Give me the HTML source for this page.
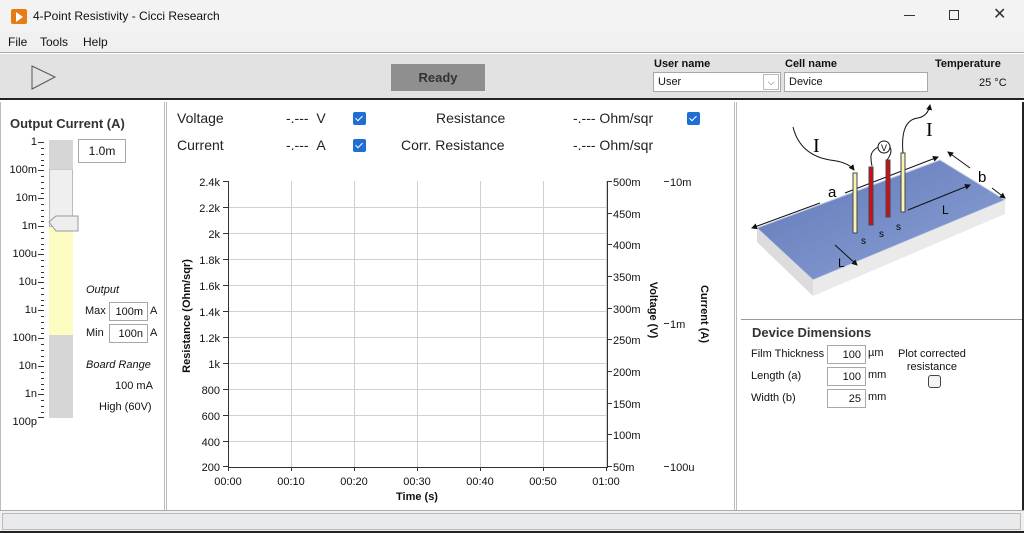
<!DOCTYPE html>
<html><head><meta charset="utf-8"><style>
*{margin:0;padding:0;box-sizing:border-box}
body{width:1024px;height:533px;overflow:hidden;background:#fff;font-family:"Liberation Sans",sans-serif;color:#111;position:relative}
.a{position:absolute;white-space:nowrap}
.box{position:absolute;border:1px solid #a8a8a8;background:#fff;font-size:11px;padding:0 4px;line-height:18px}
.cb{position:absolute;width:13px;height:13px;background:#1e6fd1;border-radius:2px}
.cb:after{content:"";position:absolute;left:4px;top:2px;width:3px;height:6px;border:solid #fff;border-width:0 1.3px 1.3px 0;transform:rotate(45deg)}
.s11{font-size:11px}
.b{font-weight:bold}
</style></head><body>
<div class="a" style="left:0;top:0;width:1024px;height:32px;background:#f3f3f3"></div>
<div class="a" style="left:11px;top:9px;width:16px;height:15px;background:#e87a17;border-radius:2px"></div>
<div class="a" style="left:16px;top:12px;width:0;height:0;border-left:7px solid #fff;border-top:5px solid transparent;border-bottom:5px solid transparent"></div>
<div class="a" style="left:33px;top:9px;font-size:12px">4-Point Resistivity - Cicci Research</div>
<div class="a" style="left:904px;top:15px;width:11px;height:1px;background:#333"></div>
<div class="a" style="left:949px;top:10px;width:10px;height:10px;border:1px solid #333"></div>
<div class="a" style="left:993px;top:4px;font-size:16px;color:#333">✕</div>
<div class="a" style="left:0;top:32px;width:1024px;height:21px;background:#f0f0f0;border-bottom:1px solid #aaa"></div>
<div class="a" style="left:8px;top:35px;font-size:12px">File</div>
<div class="a" style="left:40px;top:35px;font-size:12px">Tools</div>
<div class="a" style="left:83px;top:35px;font-size:12px">Help</div>
<div class="a" style="left:0;top:54px;width:1024px;height:46px;background:#e2e2e2;border-bottom:2px solid #222"></div>
<svg class="a" style="left:30px;top:64px" width="28" height="28"><path d="M2 2 L25 13 L2 25 Z" fill="none" stroke="#555" stroke-width="1"/></svg>
<div class="a" style="left:391px;top:64px;width:94px;height:27px;background:#8f8f8f;font-size:13px;font-weight:bold;color:#333;text-align:center;line-height:27px">Ready</div>
<div class="a s11 b" style="left:654px;top:58px">User name</div>
<div class="box" style="left:653px;top:72px;width:128px;height:20px">User</div>
<div class="a" style="left:763px;top:74px;width:16px;height:16px;border:1px solid #bbb;background:#fff;font-size:9px;text-align:center;line-height:14px;color:#555">⌵</div>
<div class="a s11 b" style="left:785px;top:58px">Cell name</div>
<div class="box" style="left:784px;top:72px;width:144px;height:20px">Device</div>
<div class="a s11 b" style="left:935px;top:58px">Temperature</div>
<div class="a s11" style="left:979px;top:77px">25 °C</div>
<div class="a" style="left:164px;top:102px;width:3px;height:408px;border-left:1px solid #bbb;border-right:1px solid #bbb"></div>
<div class="a" style="left:734px;top:102px;width:3px;height:408px;border-left:1px solid #bbb;border-right:1px solid #bbb"></div>
<div class="a" style="left:0;top:102px;width:1px;height:408px;background:#bbb"></div>
<div class="a" style="left:1022px;top:102px;width:2px;height:431px;background:#222"></div>
<div class="a" style="left:0;top:510px;width:1024px;height:23px;background:#f0f0f0;border-top:1px solid #aaa"></div>
<div class="a" style="left:2px;top:513px;width:1019px;height:17px;background:#e8eaec;border:1px solid #bbb"></div>
<div class="a" style="left:0;top:531px;width:1024px;height:2px;background:#222"></div>
<div class="a b" style="left:10px;top:116px;font-size:13px;color:#333">Output Current (A)</div>
<div class="a" style="left:49px;top:140px;width:24px;height:278px;background:#d6d6d6"></div>
<div class="a" style="left:49px;top:169px;width:24px;height:58px;background:#efefef;border:1px solid #bbb;border-top-color:#ccc"></div>
<div class="a" style="left:49px;top:227px;width:24px;height:108px;background:#fdfdc3"></div>
<svg class="a" style="left:48px;top:214px" width="32" height="20"><path d="M1 8 L8 2 L30 2 L30 17 L8 17 Z" fill="#eee" stroke="#999"/></svg>
<div class="box" style="left:78px;top:139px;width:48px;height:24px;font-size:12px;text-align:center;line-height:22px">1.0m</div>
<div class="a s11" style="left:0;top:135px;width:37px;text-align:right;line-height:14px">1<br><br>100m<br><br>10m<br><br>1m<br><br>100u<br><br>10u<br><br>1u<br><br>100n<br><br>10n<br><br>1n<br><br>100p</div>
<svg class="a" style="left:38px;top:140px" width="8" height="280">
<g stroke="#333" stroke-width="1">
<path d="M0 2.5h6M0 30.5h6M0 58.5h6M0 86.5h6M0 114.5h6M0 142.5h6M0 170.5h6M0 198.5h6M0 226.5h6M0 254.5h6M0 277.5h6"/>
<path d="M3 8.5h3M3 14.5h3M3 20.5h3M3 25.5h3M3 36.5h3M3 42.5h3M3 48.5h3M3 53.5h3M3 64.5h3M3 70.5h3M3 76.5h3M3 81.5h3M3 92.5h3M3 98.5h3M3 104.5h3M3 109.5h3M3 120.5h3M3 126.5h3M3 132.5h3M3 137.5h3M3 148.5h3M3 154.5h3M3 160.5h3M3 165.5h3M3 176.5h3M3 182.5h3M3 188.5h3M3 193.5h3M3 204.5h3M3 210.5h3M3 216.5h3M3 221.5h3M3 232.5h3M3 238.5h3M3 244.5h3M3 249.5h3M3 260.5h3M3 266.5h3M3 272.5h3"/></g></svg>
<div class="a s11" style="left:86px;top:284px;font-style:italic">Output</div>
<div class="a s11" style="left:85px;top:305px">Max</div>
<div class="box" style="left:109px;top:302px;width:39px;height:19px;text-align:right">100m</div>
<div class="a s11" style="left:150px;top:305px">A</div>
<div class="a s11" style="left:86px;top:327px">Min</div>
<div class="box" style="left:109px;top:324px;width:39px;height:19px;text-align:right">100n</div>
<div class="a s11" style="left:150px;top:327px">A</div>
<div class="a s11" style="left:86px;top:359px;font-style:italic">Board Range</div>
<div class="a s11" style="left:115px;top:380px">100 mA</div>
<div class="a s11" style="left:99px;top:401px">High (60V)</div>
<div class="a" style="left:177px;top:110px;font-size:14px;color:#222">Voltage</div>
<div class="a" style="left:286px;top:110px;font-size:14px;color:#222">-.--- &nbsp;V</div>
<div class="cb" style="left:353px;top:112px"></div>
<div class="a" style="left:436px;top:110px;font-size:14px;color:#222">Resistance</div>
<div class="a" style="left:573px;top:110px;font-size:14px;color:#222">-.--- Ohm/sqr</div>
<div class="cb" style="left:687px;top:112px"></div>
<div class="a" style="left:177px;top:137px;font-size:14px;color:#222">Current</div>
<div class="a" style="left:286px;top:137px;font-size:14px;color:#222">-.--- &nbsp;A</div>
<div class="cb" style="left:353px;top:139px"></div>
<div class="a" style="left:401px;top:137px;font-size:14px;color:#222">Corr. Resistance</div>
<div class="a" style="left:573px;top:137px;font-size:14px;color:#222">-.--- Ohm/sqr</div>
<svg class="a" style="left:170px;top:170px" width="560" height="340" font-family="Liberation Sans" font-size="11">
<g stroke="#d0d0d0" stroke-width="1">
<path d="M121.5 11v286M184.5 11v286M247.5 11v286M310.5 11v286M373.5 11v286M436.5 11v286"/>
<path d="M58 37.5h379M58 63.5h379M58 89.5h379M58 115.5h379M58 141.5h379M58 167.5h379M58 193.5h379M58 219.5h379M58 245.5h379M58 271.5h379"/>
</g>
<path d="M58.5 11v286.5H437.5V11" fill="none" stroke="#333"/>
<g stroke="#333">
<path d="M53 11.5h5M53 37.5h5M53 63.5h5M53 89.5h5M53 115.5h5M53 141.5h5M53 167.5h5M53 193.5h5M53 219.5h5M53 245.5h5M53 271.5h5M53 296.5h5"/>
<path d="M437 11.5h5M437 43.5h5M437 74.5h5M437 106.5h5M437 138.5h5M437 169.5h5M437 201.5h5M437 233.5h5M437 264.5h5M437 296.5h5"/>
<path d="M494 11.5h5M494 153.5h5M494 296.5h5"/>
<path d="M58.5 297v4M121.5 297v4M184.5 297v4M247.5 297v4M310.5 297v4M373.5 297v4M436.5 297v4"/>
</g>
<g text-anchor="end" fill="#111">
<text x="50" y="16">2.4k</text><text x="50" y="42">2.2k</text><text x="50" y="68">2k</text><text x="50" y="94">1.8k</text><text x="50" y="120">1.6k</text><text x="50" y="146">1.4k</text><text x="50" y="172">1.2k</text><text x="50" y="198">1k</text><text x="50" y="224">800</text><text x="50" y="250">600</text><text x="50" y="276">400</text><text x="50" y="301">200</text>
</g>
<g fill="#111">
<text x="443" y="16">500m</text><text x="443" y="48">450m</text><text x="443" y="79">400m</text><text x="443" y="111">350m</text><text x="443" y="143">300m</text><text x="443" y="174">250m</text><text x="443" y="206">200m</text><text x="443" y="238">150m</text><text x="443" y="269">100m</text><text x="443" y="301">50m</text>
<text x="500" y="16">10m</text><text x="500" y="158">1m</text><text x="500" y="301">100u</text>
</g>
<g text-anchor="middle" fill="#111">
<text x="58" y="315">00:00</text><text x="121" y="315">00:10</text><text x="184" y="315">00:20</text><text x="247" y="315">00:30</text><text x="310" y="315">00:40</text><text x="373" y="315">00:50</text><text x="436" y="315">01:00</text>
<text x="247" y="330" font-weight="bold">Time (s)</text>
<text transform="translate(20,146) rotate(-90)" font-weight="bold">Resistance (Ohm/sqr)</text>
<text transform="translate(480,140) rotate(90)" font-weight="bold">Voltage (V)</text>
<text transform="translate(531,144) rotate(90)" font-weight="bold">Current (A)</text>
</g>
</svg>
<svg class="a" style="left:740px;top:100px" width="280" height="215" font-family="Liberation Serif">
<defs><linearGradient id="g" x1="0" y1="0" x2="1" y2="1"><stop offset="0" stop-color="#5f78b8"/><stop offset="1" stop-color="#8ea2d6"/></linearGradient>
<marker id="m" markerWidth="6" markerHeight="6" refX="5" refY="3" orient="auto"><path d="M0 0L6 3L0 6Z" fill="#111"/></marker></defs>
<path d="M17 128 L200 60 L265 100 L73 180 Z" fill="url(#g)" stroke="#c4cce4"/>
<path d="M17 128 L73 180 L73 196 L17 142 Z" fill="#dcdcdc"/>
<path d="M73 180 L265 100 L265 114 L73 196 Z" fill="#eaeaea"/>
<g stroke="#111" stroke-width="1" fill="none">
<path d="M80 103 L12 128" marker-end="url(#m)"/>
<path d="M105 93 L198 57" marker-end="url(#m)"/>
<path d="M230 68 L208 52" marker-end="url(#m)"/>
<path d="M252 88 L265 98" marker-end="url(#m)"/>
<path d="M168 110 L230 85" marker-end="url(#m)"/>
<path d="M95 145 L117 165" marker-end="url(#m)"/>
<path d="M53 27 Q60 55 90 60 Q108 62 114 70" marker-end="url(#m)"/>
<path d="M163 53 Q160 20 178 18 Q188 16 190 5" marker-end="url(#m)"/>
<circle cx="144" cy="47" r="6" fill="#fff"/>
<path d="M138 47 Q130 52 131 58 Q131 62 132 66 M150 47 Q153 52 147 60"/>
</g>
<rect x="113" y="73" width="4" height="60" fill="#fdf3b0" stroke="#445"/>
<rect x="129" y="67" width="4" height="58" fill="#d01010" stroke="#445"/>
<rect x="146" y="60" width="4" height="57" fill="#d01010" stroke="#445"/>
<rect x="161" y="53" width="4" height="59" fill="#fdf3b0" stroke="#445"/>
<text x="88" y="97" font-family="Liberation Sans" font-size="15">a</text>
<text x="238" y="82" font-family="Liberation Sans" font-size="15">b</text>
<text x="202" y="114" font-family="Liberation Sans" font-size="12">L</text>
<text x="98" y="167" font-family="Liberation Sans" font-size="12">L</text>
<text x="121" y="144" font-family="Liberation Sans" font-size="10">s</text>
<text x="139" y="137" font-family="Liberation Sans" font-size="10">s</text>
<text x="156" y="130" font-family="Liberation Sans" font-size="10">s</text>
<text x="141" y="51" font-family="Liberation Sans" font-size="9">V</text>
<text x="73" y="52" font-size="20">I</text>
<text x="186" y="36" font-size="20">I</text>
</svg>
<div class="a" style="left:741px;top:319px;width:281px;height:1px;background:#999"></div>
<div class="a b" style="left:752px;top:325px;font-size:13px;color:#333">Device Dimensions</div>
<div class="a s11" style="left:751px;top:348px">Film Thickness</div>
<div class="box" style="left:827px;top:345px;width:39px;height:19px;text-align:right">100</div>
<div class="a s11" style="left:868px;top:347px">µm</div>
<div class="a s11" style="left:751px;top:370px">Length (a)</div>
<div class="box" style="left:827px;top:367px;width:39px;height:19px;text-align:right">100</div>
<div class="a s11" style="left:868px;top:369px">mm</div>
<div class="a s11" style="left:751px;top:392px">Width (b)</div>
<div class="box" style="left:827px;top:389px;width:39px;height:19px;text-align:right">25</div>
<div class="a s11" style="left:868px;top:391px">mm</div>
<div class="a s11" style="left:898px;top:348px;text-align:center;line-height:13px">Plot corrected<br>resistance</div>
<div class="a" style="left:928px;top:375px;width:13px;height:13px;border:1px solid #444;border-radius:3px;background:#f4f4f4"></div>
</body></html>
